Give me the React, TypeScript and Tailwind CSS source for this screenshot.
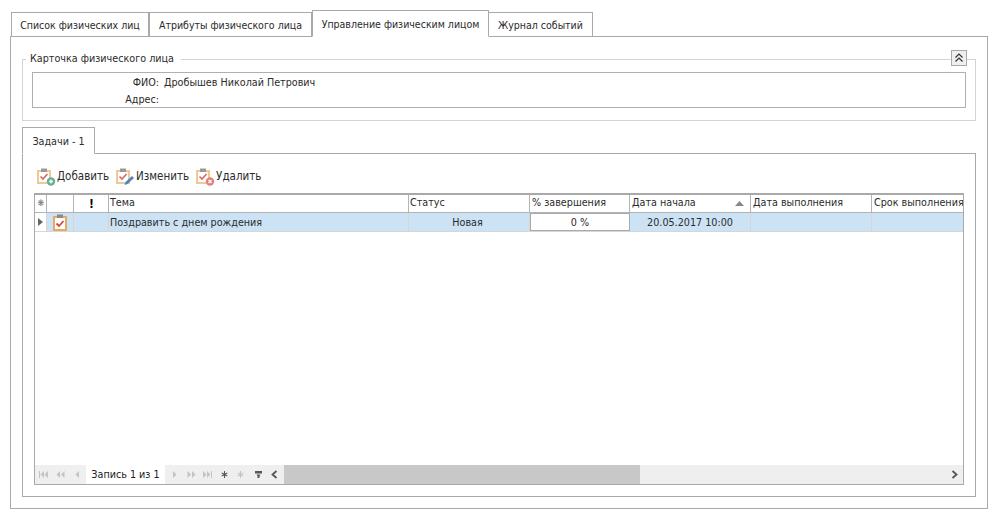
// Карточка физического лица: вкладки, группа, таблица задач
const gridCols = "grid grid-cols-[12px_27px_35px_300px_121px_100px_121px_121px_91px]";

function Clipboard({ badge }: { badge: "add" | "edit" | "del" }) {
  return (
    <svg width="20" height="18" viewBox="1 0 20 18" className="shrink-0">
      <rect x="2" y="3" width="12" height="12" fill="#fff" stroke="#f0c896" strokeWidth="2" />
      <rect x="5" y="0.500" width="6" height="3.500" fill="#999" />
      <path d="M4.500 8.500 L7 11 L11.500 6" fill="none" stroke="#dc6a60" strokeWidth="1.700" />
      {badge === "add" && (
        <g>
          <circle cx="15" cy="13.500" r="4.200" fill="#66b096" />
          <path d="M13 13.500h4M15 11.500v4" stroke="#fff" strokeWidth="1.300" />
        </g>
      )}
      {badge === "edit" && <path d="M9.500 17 L10.500 14 L17 8 L19 10 L12.500 16z" fill="#4a86c8" />}
      {badge === "del" && (
        <g>
          <circle cx="15" cy="13.500" r="4.200" fill="#e2807a" />
          <path d="M13.500 12l3 3M16.500 12l-3 3" stroke="#fff" strokeWidth="1.300" />
        </g>
      )}
    </svg>
  );
}

function TaskIcon() {
  return (
    <svg width="16" height="17" viewBox="0 0 16 17" className="shrink-0">
      <rect x="2" y="3" width="12" height="13" fill="#fff" stroke="#e8a860" strokeWidth="2" />
      <rect x="5" y="0.500" width="6" height="3.500" fill="#8a8a8a" />
      <path d="M4.500 9.500 L7 12 L11.500 7" fill="none" stroke="#d8443a" strokeWidth="1.800" />
    </svg>
  );
}

function NavIcon({ d, dim, className = "" }: { d: string; dim?: boolean; className?: string }) {
  return (
    <svg width="9" height="9" viewBox="0 0 9 9" className={`shrink-0 ${className}`}>
      <path d={d} fill={dim ? "#c4c4c4" : "#555"} />
    </svg>
  );
}

function TopTab({ label, width, active }: { label: string; width: string; active?: boolean }) {
  return (
    <div
      className={`${width} border border-[#a9a9a9] -mb-px bg-white flex items-center justify-center pt-[3px] ${
        active ? "h-[27px] border-b-white relative z-10" : "h-[25px]"
      }`}
    >
      {label}
    </div>
  );
}

function HeadCell({ children, className = "" }: { children?: React.ReactNode; className?: string }) {
  return (
    <div className={`border-r border-[#b4b4b4] pl-[1px] flex items-center whitespace-nowrap overflow-hidden ${className}`}>
      {children}
    </div>
  );
}

function RowCell({ children, className = "" }: { children?: React.ReactNode; className?: string }) {
  return (
    <div className={`border-r border-[#d6d6d6] flex items-center whitespace-nowrap overflow-hidden ${className}`}>
      {children}
    </div>
  );
}

export default function App() {
  return (
    <div className="w-[998px] h-[519px] bg-white pt-[10px] pl-[10px] text-[10.5px] text-[#2b2b2b] font-['DejaVu_Sans','Liberation_Sans',sans-serif] [font-stretch:condensed] overflow-hidden">
      {/* верхние вкладки */}
      <div className="flex items-end h-[26px] pl-px">
        <TopTab label="Список физических лиц" width="w-[138px]" />
        <TopTab label="Атрибуты физического лица" width="w-[163px]" />
        <TopTab label="Управление физическим лицом" width="w-[177px]" active />
        <TopTab label="Журнал событий" width="w-[104px] border-l-0" />
      </div>

      <div className="w-[978px] h-[473px] border border-[#a9a9a9] px-[11px] pt-[15px]">
        {/* Карточка */}
        <div className="relative">
          <fieldset className="h-[69px] border border-[#d4d4d4] px-[9px]">
            <legend className="-ml-[6px] pl-[4px] pr-[7px] leading-[14px] text-[10.7px]">Карточка физического лица</legend>
            <div className="h-[36px] mt-[6px] pt-[2px] border border-[#b0b0b0] grid grid-cols-[126px_1fr] gap-x-[5px] content-center leading-[17px] text-[10.7px]">
              <div className="text-right">ФИО:</div>
              <div>Дробышев Николай Петрович</div>
              <div className="text-right">Адрес:</div>
              <div />
            </div>
          </fieldset>
          <div className="absolute right-[9px] -top-[2px] w-[16px] h-[16px] border border-[#a9a9a9] bg-[#efefef] flex items-center justify-center">
            <svg width="10" height="10" viewBox="0 0 10 10">
              <path d="M1.500 4.500 L5 1 L8.500 4.500M1.500 8.500 L5 5 L8.500 8.500" fill="none" stroke="#333" strokeWidth="1.200" />
            </svg>
          </div>
        </div>

        {/* Задачи */}
        <div className="mt-[6px] h-[27px] w-[73px] border border-[#a9a9a9] border-b-white relative z-10 flex items-center justify-center pt-[3px] text-[10.7px]">
          Задачи - 1
        </div>
        <div className="-mt-px w-[954px] h-[344px] border border-[#a9a9a9] pl-[11px] pt-[13px]">
          <div className="flex items-center h-[20px] gap-[7px] pl-[3px] text-[11.5px]">
            <div className="flex items-center"><Clipboard badge="add" />Добавить</div>
            <div className="flex items-center"><Clipboard badge="edit" />Изменить</div>
            <div className="flex items-center"><Clipboard badge="del" />Удалить</div>
          </div>

          <div className="mt-[6px] w-[930px] h-[292px] border border-[#a9a9a9] border-t-2 flex flex-col">
            <div className={`${gridCols} h-[18px] border-b border-[#b4b4b4] text-[10.7px]`}>
              <HeadCell className="justify-center text-[9px] text-[#777]">❋</HeadCell>
              <HeadCell />
              <HeadCell className="justify-center font-bold text-black text-[12px]">!</HeadCell>
              <HeadCell>Тема</HeadCell>
              <HeadCell>Статус</HeadCell>
              <HeadCell className="pl-[2px]">% завершения</HeadCell>
              <HeadCell className="justify-between pl-[2px] pr-[6px]">
                Дата начала
                <svg width="9" height="5" viewBox="0 0 9 5"><path d="M0 5 L4.500 0 L9 5z" fill="#888" /></svg>
              </HeadCell>
              <HeadCell className="pl-[2px]">Дата выполнения</HeadCell>
              <HeadCell className="border-r-0 pl-[2px]">Срок выполнения</HeadCell>
            </div>
            <div className={`${gridCols} h-[19px] bg-[#cce3f5] border-b border-[#d6d6d6] text-[10.7px]`}>
              <RowCell className="justify-center bg-white">
                <svg width="5" height="8" viewBox="0 0 5 8"><path d="M0 0 L5 4 L0 8z" fill="#666" /></svg>
              </RowCell>
              <RowCell className="justify-center"><TaskIcon /></RowCell>
              <RowCell />
              <RowCell className="pl-[1px] pt-[2px]">Поздравить с днем рождения</RowCell>
              <RowCell className="justify-center pr-[3px] pt-[2px]">Новая</RowCell>
              <RowCell className="border-r-0">
                <div className="w-full h-full bg-white border border-[#a9a9a9] pt-[2px] flex items-center justify-center">0 %</div>
              </RowCell>
              <RowCell className="justify-center pt-[2px]">20.05.2017 10:00</RowCell>
              <RowCell />
              <RowCell className="border-r-0" />
            </div>
            <div className="flex-1" />
            {/* навигатор и прокрутка */}
            <div className="h-[19px] bg-[#efefef] flex items-center">
              <div className="w-[51px] pl-[4px] flex items-center gap-[8px]">
                <NavIcon dim d="M0 1h1v7H0zM5 1v7L1.500 4.500zM9 1v7L5.500 4.500z" />
                <NavIcon dim d="M4 1v7L0.500 4.500zM8.500 1v7L5 4.500z" />
                <NavIcon dim d="M6 1v7L2.500 4.500z" />
              </div>
              <div className="w-[79px] h-full bg-white flex items-center justify-center pt-px text-[#222] text-[10.7px]">Запись 1 из 1</div>
              <div className="w-[119px] flex items-center pl-[5px] gap-[7px]">
                <NavIcon dim d="M3 1v7l3.500-3.500z" />
                <NavIcon dim className="ml-px" d="M0.500 1v7L4 4.500zM5 1v7l3.500-3.500z" />
                <NavIcon dim d="M0 1v7l3.500-3.500zM4 1v7l3.500-3.500zM8 1h1v7H8z" />
                <NavIcon className="ml-px" d="M4 1h1v2.500l2-1 .5 1-2 1 2 1-.5 1-2-1V8H4V5.500l-2 1-.5-1 2-1-2-1 .5-1 2 1z" />
                <NavIcon dim d="M4 1h1v2.500l2-1 .5 1-2 1 2 1-.5 1-2-1V8H4V5.500l-2 1-.5-1 2-1-2-1 .5-1 2 1z" />
                <NavIcon className="ml-[2px]" d="M1 1h7v2.500H1zM2.500 4.500h4L5.500 6v2h-2V6z" />
                <svg width="7" height="9" viewBox="0 0 7 9" className="shrink-0 ml-px"><path d="M5.500 1 L1.500 4.500 L5.500 8" fill="none" stroke="#555" strokeWidth="1.800" /></svg>
              </div>
              <div className="w-[356px] h-full bg-[#c8c8c8]" />
              <div className="flex-1 flex justify-end pr-[5px]">
                <svg width="7" height="9" viewBox="0 0 7 9"><path d="M1.500 1 L5.500 4.500 L1.500 8" fill="none" stroke="#555" strokeWidth="1.800" /></svg>
              </div>
            </div>
          </div>
        </div>
      </div>
    </div>
  );
}
